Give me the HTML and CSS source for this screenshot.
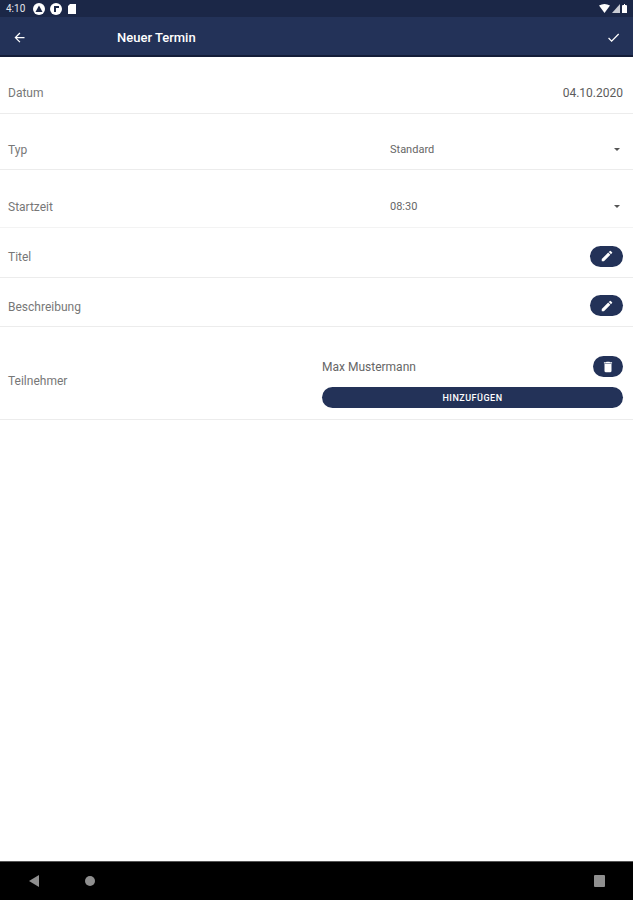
FILE: index.html
```html
<!DOCTYPE html>
<html lang="de">
<head>
  <meta charset="UTF-8" />
  <meta name="viewport" content="width=device-width, initial-scale=1.0" />
  <title>Neuer Termin</title>
  <link rel="stylesheet" href="styles.css">
</head>
<body>
  <div class="statusbar">
    <span class="clock">4:10</span>
    <span class="dot"><svg viewBox="0 0 12 12"><path d="M6 2.500 9.500 9h-7z" fill="#1b2747"/></svg></span>
    <span class="dot"><svg viewBox="0 0 12 12"><path d="M4 3h5v2H6v4H4z" fill="#1b2747"/></svg></span>
    <svg class="sd" viewBox="0 0 8 10"><path d="M2 0h6v10H0V2z" fill="#fff"/></svg>
    <span class="spacer"></span>
    <svg class="sys" width="11" height="9" viewBox="0 0 11 9"><path d="M0 1.500Q5.500-1.500 11 1.500L5.500 9z" fill="#fff"/></svg>
    <svg class="sys" width="8" height="9" viewBox="0 0 8 9"><path d="M8 0v9H0z" fill="#c9ccd4"/></svg>
    <svg class="sys" width="5" height="9" viewBox="0 0 5 9"><path d="M1 1h1V0h1v1h1q1 0 1 1v7H0V2q0-1 1-1z" fill="#fff"/></svg>
  </div>
  <header class="toolbar">
    <svg class="tool-icon" viewBox="0 0 24 24"><path d="M20 11H7.800l5.600-5.600L12 4l-8 8 8 8 1.400-1.400L7.800 13H20z" fill="#fff"/></svg>
    <h1>Neuer Termin</h1>
    <svg class="tool-icon" viewBox="0 0 24 24"><path d="M9 16.200 4.800 12l-1.400 1.400L9 19 21 7l-1.400-1.400z" fill="#fff"/></svg>
  </header>

  <main class="form">
    <div class="row row-date">
      <span class="label">Datum</span>
      <span class="date">04.10.2020</span>
    </div>
    <div class="row row-select">
      <span class="label">Typ</span>
      <div class="select"><span>Standard</span><i class="caret"></i></div>
    </div>
    <div class="row row-select row-time">
      <span class="label">Startzeit</span>
      <div class="select"><span>08:30</span><i class="caret"></i></div>
    </div>
    <div class="row row-edit">
      <span class="label">Titel</span>
      <button class="pill"><svg viewBox="0 0 24 24"><path d="M3 17.250V21h3.750L17.800 9.940l-3.750-3.750zM20.700 7.040a1 1 0 0 0 0-1.410l-2.340-2.340a1 1 0 0 0-1.410 0l-1.830 1.830 3.750 3.750z" fill="#fff"/></svg></button>
    </div>
    <div class="row row-edit row-edit-last">
      <span class="label">Beschreibung</span>
      <button class="pill"><svg viewBox="0 0 24 24"><path d="M3 17.250V21h3.750L17.800 9.940l-3.750-3.750zM20.700 7.040a1 1 0 0 0 0-1.410l-2.340-2.340a1 1 0 0 0-1.410 0l-1.830 1.830 3.750 3.750z" fill="#fff"/></svg></button>
    </div>
    <div class="row row-people">
      <span class="label">Teilnehmer</span>
      <div class="people">
        <div class="person">
          <span>Max Mustermann</span>
          <button class="pill pill-small"><svg viewBox="0 0 24 24"><path d="M6 19c0 1.100.9 2 2 2h8c1.100 0 2-.9 2-2V7H6zM19 4h-3.500l-1-1h-5l-1 1H5v2h14z" fill="#fff"/></svg></button>
        </div>
        <button class="add">HINZUFÜGEN</button>
      </div>
    </div>
  </main>

  <footer class="navbar">
    <svg class="nav-back" width="12" height="14" viewBox="0 0 12 14"><path d="M11 1v12L1 7z" fill="#8f8f8f"/></svg>
    <i class="nav-home"></i>
    <span class="spacer"></span>
    <i class="nav-recent"></i>
  </footer>
</body>
</html>
```

FILE: styles.css
```css
* {
  box-sizing: border-box;
}

body {
  margin: 0;
  height: 900px;
  display: flex;
  flex-direction: column;
  overflow: hidden;
  background: #fff;
  font-family: Roboto, "Liberation Sans", sans-serif;
  color: #666;
}

.spacer {
  flex: 1;
}

.statusbar {
  height: 17px;
  display: flex;
  align-items: center;
  padding: 0 6px;
  background: #1b2747;
  color: #e4e6ec;
  font-size: 10px;
}

.clock {
  margin-right: 8px;
}

.dot {
  width: 12px;
  height: 12px;
  margin-right: 5px;
  border-radius: 50%;
  background: #fff;
  display: flex;
}

.sd {
  width: 8px;
  height: 10px;
  margin-left: 1px;
}

.sys {
  margin-left: 2px;
}

.toolbar {
  height: 40px;
  display: flex;
  align-items: center;
  padding: 2px 12px 0;
  background: #233258;
  border-bottom: 2px solid #141d38;
}

.toolbar h1 {
  flex: 1;
  margin: 0 0 0 90px;
  color: #fff;
  font-size: 13px;
  font-weight: 500;
}

.tool-icon {
  width: 15px;
  height: 15px;
}

.form {
  flex: 1;
}

.row {
  display: flex;
  align-items: center;
  justify-content: space-between;
  padding: 0 10px 0 8px;
  border-bottom: 1.5px solid #ececec;
}

.label {
  font-size: 12px;
  color: #777;
}

.row-date {
  height: 57px;
  padding-top: 16px;
}

.date {
  font-size: 12px;
  color: #5c5c5c;
}

.row-select {
  height: 56px;
  padding-top: 15px;
}

.row-time {
  height: 58px;
  border-bottom-color: #f3f3f3;
}

.row-select .label,
.row-edit .label {
  padding-top: 2px;
}

.select {
  width: 233px;
  display: flex;
  align-items: center;
  justify-content: space-between;
  font-size: 11px;
  color: #666;
}

.caret {
  width: 0;
  height: 0;
  margin-right: 3px;
  border: 3px solid transparent;
  border-top: 3px solid #555;
  border-bottom: 0;
}

.row-edit {
  height: 50px;
  padding-top: 7px;
}

.row-edit-last {
  height: 49px;
}

.pill {
  width: 33px;
  height: 21px;
  display: flex;
  align-items: center;
  justify-content: center;
  padding: 0;
  border: none;
  border-radius: 11px;
  background: #233258;
}

.pill svg {
  width: 14px;
  height: 14px;
}

.pill-small {
  width: 30px;
}

.row-people {
  height: 93px;
  padding-top: 16px;
}

.people {
  width: 301px;
  display: flex;
  flex-direction: column;
  gap: 10px;
  padding-top: 2px;
}

.person {
  display: flex;
  align-items: center;
  justify-content: space-between;
  font-size: 12px;
  color: #666;
}

.add {
  height: 21px;
  padding: 0;
  border: none;
  border-radius: 11px;
  background: #233258;
  color: #fff;
  font-family: inherit;
  font-size: 9px;
  font-weight: 500;
  letter-spacing: 0.5px;
}

.navbar {
  height: 39px;
  display: flex;
  align-items: center;
  padding: 0 28px;
  background: #000;
  border-top: 1px solid #555;
}

.nav-back {
  margin-right: 45px;
}

.nav-home {
  width: 10px;
  height: 10px;
  border-radius: 50%;
  background: #8f8f8f;
}

.nav-recent {
  width: 11px;
  height: 12px;
  border-radius: 1px;
  background: #8f8f8f;
}
```
